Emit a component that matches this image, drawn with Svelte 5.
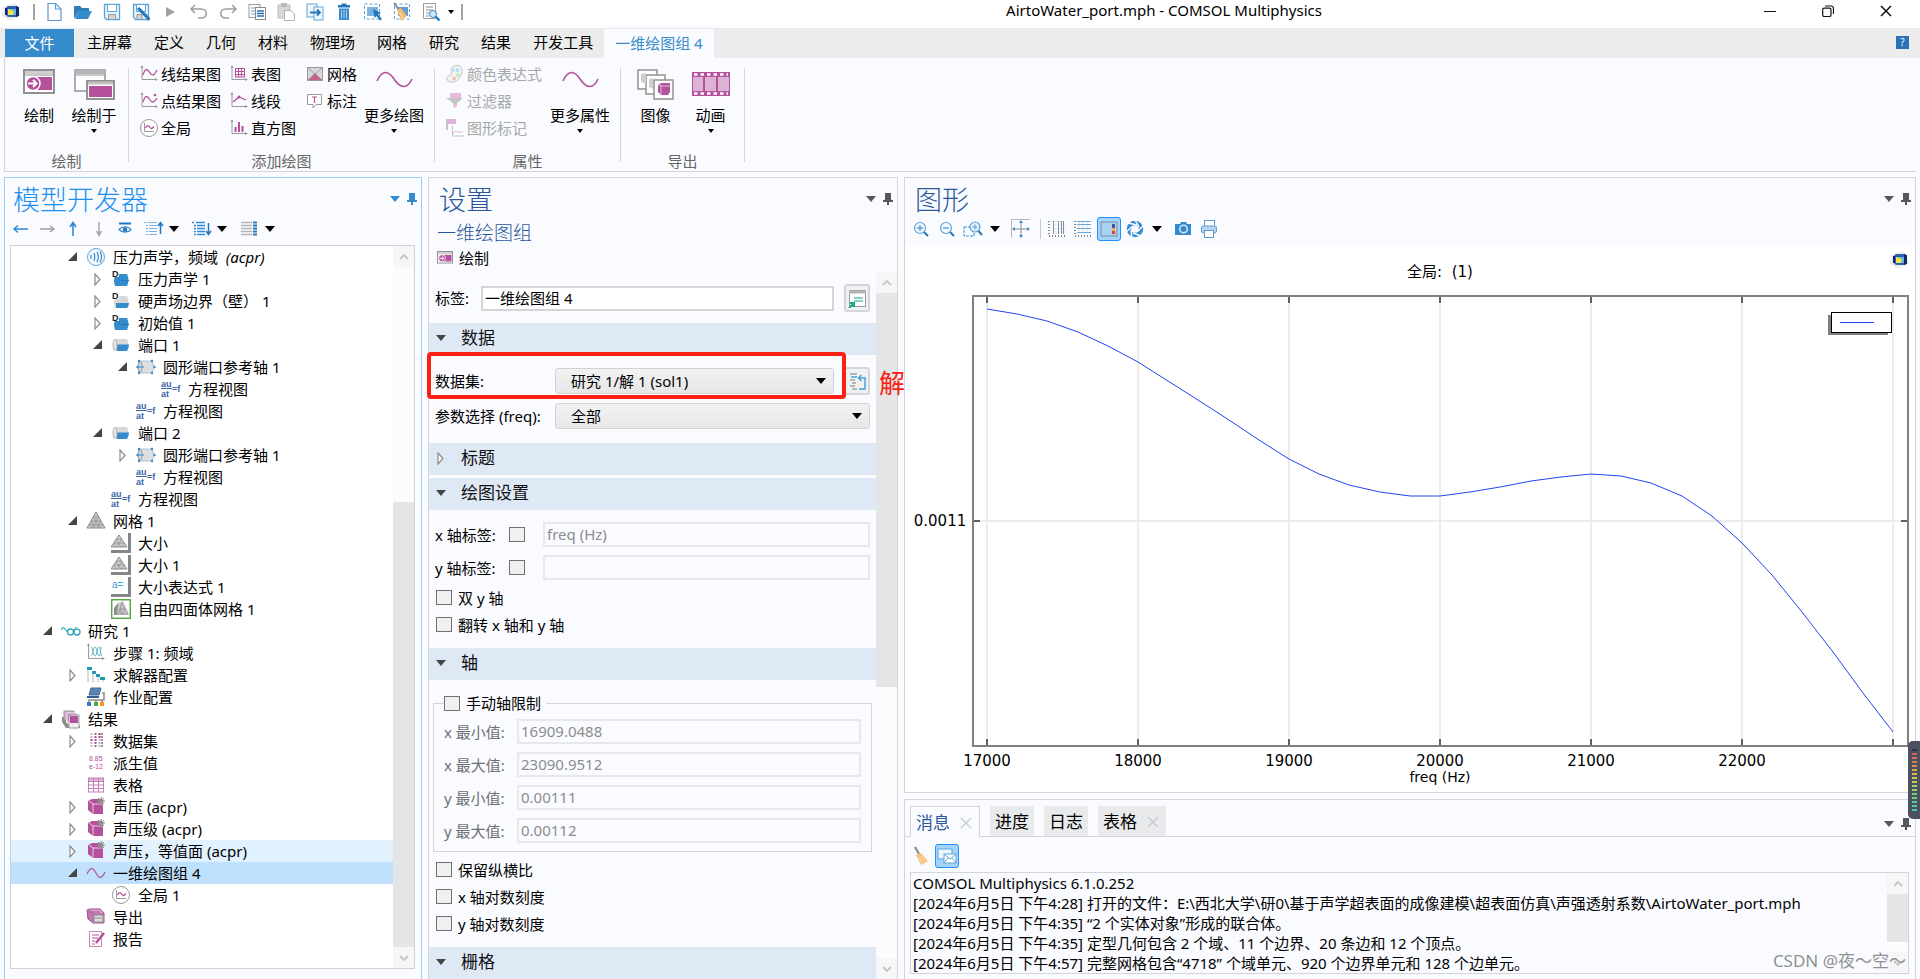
<script lang="ts">
  const icons: Record<string, string> = {
    logo: `<path d="M2 5 L15 1 L20 13 L9 19 L1 14Z" fill="#ececec"/><rect x="5" y="4" width="13" height="11" rx="3" fill="#2b5fb4"/><path d="M15 4 l3 1.500 v8 l-3 1.500z" fill="#0b2a66"/><rect x="7" y="7" width="8" height="6" fill="#5fb6d8"/><path d="M7 7 L13 9 L12 13 L7 13Z" fill="#f4e04a"/><path d="M5 6 V13" stroke="#10206a" stroke-width="2"/>`,
    fresh: `<path d="M4 1.500 H11.500 L17 7 V18.500 H4Z" fill="#fff" stroke="#5c9bd1" stroke-width="1.200"/><path d="M11.500 1.500 V7 H17" fill="none" stroke="#5c9bd1" stroke-width="1.200"/>`,
    open: `<path d="M1 4 H7 L9 6 H16 V9 H6 L2 16 H1Z" fill="#2f7fbf"/><path d="M6 9 H19 L15 17 H2Z" fill="#368bcd"/>`,
    save: `<path d="M2.500 2.500 H17.500 V17.500 H4.500 L2.500 15.500Z" fill="#e8f3fb" stroke="#5fa5d8" stroke-width="1.300"/><path d="M5.500 3 V9.500 H14.500 V3" fill="#fff" stroke="#5fa5d8"/><path d="M6.500 17 V12.500 H13.500 V17" fill="#d4d4d4" stroke="#9a9a9a"/>`,
    saveas: `<path d="M2.500 2.500 H17.500 V17.500 H4.500 L2.500 15.500Z" fill="#e8f3fb" stroke="#5fa5d8" stroke-width="1.300"/><path d="M5.500 3 V9.500 H14.500 V3" fill="#fff" stroke="#5fa5d8"/><path d="M6 17 V12.500 H11 V17" fill="#d4d4d4" stroke="#9a9a9a"/><path d="M7 6 L17 16 L18 18" stroke="#2477ba" stroke-width="3"/>`,
    play: `<path d="M6 5 L15 10 L6 15Z" fill="#a0a0a0"/>`,
    undo: `<path d="M6 3 L2 7 L6 11 M2 7 H12 C19 7 19 16 12 16 H9" fill="none" stroke="#a0a0a0" stroke-width="1.600"/>`,
    redo: `<path d="M14 3 L18 7 L14 11 M18 7 H8 C1 7 1 16 8 16 H11" fill="none" stroke="#a0a0a0" stroke-width="1.600"/>`,
    copy: `<rect x="2" y="2.500" width="11" height="13" fill="#fff" stroke="#9a9a9a"/><path d="M4 6H11M4 9H11M4 12H11" stroke="#5fa5d8"/><rect x="8.500" y="5.500" width="10" height="12" fill="#fff" stroke="#8a8a8a"/><path d="M10 9H17M10 11.500H17M10 14H17" stroke="#2d6fae" stroke-width="1.400"/>`,
    paste: `<path d="M2 3 H14 V16 H2Z" fill="#d8d8d8" stroke="#bdbdbd"/><rect x="5" y="1" width="6" height="4" fill="#b8b8b8"/><path d="M8.500 8.500 H15 L18.500 12 V18.500 H8.500Z" fill="#fff" stroke="#b0b0b0"/>`,
    duplicate: `<rect x="2" y="2" width="10" height="13" fill="#eef6fc" stroke="#5fa5d8"/><rect x="9" y="5" width="9" height="13" fill="#eef6fc" stroke="#5fa5d8"/><path d="M5 10.500H15M12 7.500L15 10.500L12 13.500" fill="none" stroke="#2477ba" stroke-width="1.800"/>`,
    trash: `<rect x="4" y="3" width="12" height="2.500" fill="#2477ba"/><rect x="7.500" y="1.500" width="5" height="2" fill="#2477ba"/><path d="M5 6.500H15V18H5Z" fill="#368bcd"/><path d="M7.500 8V16.500M10 8V16.500M12.500 8V16.500" stroke="#a7d2f0"/>`,
    select: `<rect x="1.500" y="2" width="15" height="15" fill="none" stroke="#5fa5d8" stroke-dasharray="3 2"/><rect x="4" y="5" width="11" height="9" fill="#7fb2de"/><path d="M10 7 L18 11 L15 12.500 L19 17 L17 18.500 L13.500 14 L11.500 16Z" fill="#2477ba"/>`,
    sweep: `<rect x="2.500" y="2" width="15" height="15" fill="none" stroke="#5fa5d8" stroke-dasharray="3 2"/><rect x="6" y="5" width="10" height="9" fill="#5f9dd3"/><path d="M2 1 L7 8" stroke="#8a8a8a" stroke-width="2"/><path d="M5 8 L9 6 L15 14 L9 19 Z" fill="#f2bd6f"/><path d="M8 11 L11 17" stroke="#fbe3bb"/>`,
    find: `<path d="M2.500 1.500H14.500V16.500H2.500Z" fill="#fff" stroke="#9a9a9a"/><path d="M5 5H12M5 8H12M5 11H9M5 14H8" stroke="#8a8a8a"/><circle cx="12" cy="12" r="3.500" fill="#cfe7f8" stroke="#368bcd"/><path d="M14.500 14.500L18.500 18.500" stroke="#2477ba" stroke-width="2.400"/>`,
    plot: `<rect x="1" y="1" width="30" height="23" fill="#fff" stroke="#929292" stroke-width="2"/><rect x="2" y="2" width="28" height="3" fill="#cfcfcf"/><path d="M2 6H30" stroke="#929292"/><rect x="12" y="8" width="17" height="13" fill="#b5509c"/><circle cx="10" cy="14.500" r="7" fill="#b5509c" stroke="#fff" stroke-width="1.500"/><path d="M5 14.500H13M10 11L13.500 14.500L10 18" fill="none" stroke="#fff" stroke-width="2"/>`,
    plotin: `<rect x="1" y="1" width="30" height="21" fill="#fff" stroke="#929292" stroke-width="1.500"/><path d="M1 3H31" stroke="#b5b5b5" stroke-width="4"/><path d="M1 6H31" stroke="#929292"/><rect x="13" y="12" width="27" height="18" fill="#fff" stroke="#929292" stroke-width="2"/><path d="M14 14H39" stroke="#c4c4c4" stroke-width="3"/><rect x="15" y="17" width="23" height="11" fill="#b5509c"/>`,
    axisline: `<path d="M3 2V15.500H18" fill="none" stroke="#9a9a9a"/><path d="M1.500 4L3 1L4.500 4M16 14L19 15.500L16 17" fill="#9a9a9a"/><path d="M4 11C7 2 9 6 11 9S15 12 18 6" fill="none" stroke="#b5509c" stroke-width="1.300"/>`,
    axispoint: `<path d="M3 2V15.500H18" fill="none" stroke="#9a9a9a"/><path d="M1.500 4L3 1L4.500 4M16 14L19 15.500L16 17" fill="#9a9a9a"/><path d="M4 11C7 2 9 6 11 9S15 12 18 7" fill="none" stroke="#b5509c" stroke-width="1.300"/><circle cx="16" cy="4" r="1.300" fill="#b5509c"/>`,
    global: `<circle cx="10" cy="10" r="8.500" fill="#fff" stroke="#9a9a9a"/><path d="M5.500 5V13.500H15" fill="none" stroke="#9a9a9a"/><path d="M6.500 10C8 6 10 8 11 9.500S13 11 15 8.500" fill="none" stroke="#b5509c" stroke-width="1.300"/>`,
    axistable: `<path d="M3 2V15.500H18" fill="none" stroke="#9a9a9a"/><path d="M1.500 4L3 1L4.500 4M16 14L19 15.500L16 17" fill="#9a9a9a"/><path d="M6 4.500H16M6 7.500H16M6 10.500H16M6 13H16M6.500 4V13M9.500 4V13M12.500 4V13M15.500 4V13" stroke="#b5509c"/>`,
    axisseg: `<path d="M3 2V15.500H18" fill="none" stroke="#9a9a9a"/><path d="M1.500 4L3 1L4.500 4M16 14L19 15.500L16 17" fill="#9a9a9a"/><path d="M4 11L10 6L17 9" fill="none" stroke="#b5509c" stroke-width="1.300"/><circle cx="10" cy="6" r="1.500" fill="#b5509c"/>`,
    histogram: `<path d="M3 2V15.500H18" fill="none" stroke="#9a9a9a"/><path d="M1.500 4L3 1L4.500 4M16 14L19 15.500L16 17" fill="#9a9a9a"/><path d="M6.500 9V14M10 4V14M13.500 8V14" stroke="#b5509c" stroke-width="2"/>`,
    surface: `<rect x="2.500" y="3.500" width="15" height="13" fill="#d6d9dc" stroke="#9a9a9a"/><path d="M3 16L10 9L17 16Z" fill="#c4638b"/><path d="M3 4L17 16M17 4L3 16" stroke="#a08a94" stroke-width=".8"/>`,
    note: `<path d="M2.500 3.500H16.500V13.500H11L8 17V13.500H2.500Z" fill="#fff" stroke="#9a9a9a"/><path d="M7 6H12M9.500 6V11M8.500 11H10.500" stroke="#b5509c"/>`,
    wave: `<path d="M1 12C6 1 12 1 18 10S31 21 36 10" fill="none" stroke="#b5509c" stroke-width="1.600"/>`,
    palette: `<path d="M9 2C15 0 18 3 17 8S12 19 6 18S1 13 5 11S3 5 9 2Z" fill="#f3f3f3" stroke="#c4c4c4"/><circle cx="8" cy="6" r="2" fill="#bfe3ec"/><circle cx="12.500" cy="6" r="2" fill="#b5dbf0"/><circle cx="13" cy="11" r="2" fill="#c7e8b4"/><circle cx="9" cy="14.500" r="2" fill="#f2c3b4"/>`,
    filter: `<rect x="5" y="2" width="11" height="6" fill="#e3bddb"/><path d="M1 7H18L12 12V14H8V12Z" fill="#c4c4c4"/><path d="M8 13H12V15L10 17L8 15Z" fill="#e3bddb"/>`,
    marker: `<path d="M2 1V12" stroke="#c4c4c4" stroke-width="2"/><rect x="3" y="1" width="8" height="5" fill="#dfb5d5"/><path d="M7.500 8V18H19" fill="none" stroke="#c0c0c0"/><path d="M8 16C11 10 13 17 18 13" fill="none" stroke="#dfb5d5"/>`,
    image: `<g fill="#fff" stroke="#929292" stroke-width="1.500"><rect x="1" y="1" width="19" height="19"/><rect x="9" y="6" width="19" height="19"/><rect x="17" y="11" width="19" height="19"/></g><path d="M4 5L9 4V15L4 13Z M12 10L16 9V20L12 18Z" fill="#cfcfcf"/><path d="M21 16L24 14H33V23L31 26H24L21 23Z" fill="#b5509c"/><path d="M21 16H24V26M24 17H33" stroke="#e4bfdc" fill="none"/>`,
    film: `<rect y="3" width="38" height="24" fill="#b5509c"/><path d="M2 5.500H36M2 24.500H36" stroke="#fff" stroke-width="2.500" stroke-dasharray="3.500 3"/><rect x="1" y="8" width="10" height="14" fill="#dcb3d5"/><rect x="13" y="8" width="11" height="14" fill="#dcb3d5"/><rect x="26" y="8" width="11" height="14" fill="#dcb3d5"/>`,
    left: `<path d="M17 10H3M7 6.500L3 10L7 13.500" fill="none" stroke="#2f8bd5" stroke-width="1.400"/>`,
    right: `<path d="M3 10H17M13 7L17 10L13 13" fill="none" stroke="#a0a0a0" stroke-width="1.400"/>`,
    up: `<path d="M10 17V4M7 8L10 3.500L13 8" fill="none" stroke="#2f8bd5" stroke-width="1.600"/>`,
    down: `<path d="M10 3V16M7.500 12L10 16.500L12.500 12" fill="none" stroke="#a0a0a0" stroke-width="1.400"/>`,
    eye: `<path d="M4 4.500H16" stroke="#2477ba" stroke-width="2"/><path d="M4 10.500C7 7 13 7 16 10.500C13 14 7 14 4 10.500Z" fill="#fff" stroke="#368bcd" stroke-width="1.200"/><circle cx="10" cy="10.500" r="2.200" fill="#2477ba"/>`,
    collapse: `<path d="M0 3.500H2M4 3.500H13M2 6.500H4M5 6.500H13M2 9.500H4M5 9.500H13M2 12.500H4M5 12.500H13M2 15.500H4M5 15.500H13" stroke="#7fb2de"/><path d="M16.500 15V4M14 7L16.500 3.500L19 7" fill="none" stroke="#2477ba" stroke-width="1.500"/>`,
    expand: `<path d="M0 3.500H2M4 3.500H13M2 6.500H4M5 6.500H13M2 9.500H4M5 9.500H13M2 12.500H4M5 12.500H13M2 15.500H4M5 15.500H13" stroke="#2f8bd5" stroke-width="1.300"/><path d="M16.500 4V15M14 12L16.500 15.500L19 12" fill="none" stroke="#2477ba" stroke-width="1.500"/>`,
    columns: `<path d="M1 3.500H12M1 6.500H12M1 9.500H12M1 12.500H12M1 15.500H12" stroke="#b5b5b5" stroke-width="1.500"/><path d="M13 3.500H17M13 6.500H17M13 9.500H17M13 12.500H17M13 15.500H17" stroke="#2477ba" stroke-width="2"/>`,
    physics: `<circle cx="10" cy="10" r="8.500" fill="#f3f9fe" stroke="#5fa5d8"/><path d="M5 8V12M8 6Q9.500 10 8 14M11 5Q13.500 10 11 15M14 4.500Q17 10 14 15.500" fill="none" stroke="#368bcd" stroke-width="1.200"/>`,
    domain: `<path d="M4 7Q2 11 4 17H16Q19 11 16 5H9Q6 5 4 7Z" fill="#368bcd"/><path d="M10 11.500H18M8 6V11" stroke="#2477ba"/><rect x="1" y="0" width="7" height="8" fill="#fff"/><text x="1" y="8" font-size="9" font-weight="700" fill="#222">D</text>`,
    wall: `<path d="M4 7Q2 11 4 17H16Q19 11 16 5H9Q6 5 4 7Z" fill="#d6d9dc"/><path d="M5 12H18Q18 15 16 17H5Z" fill="#368bcd"/><rect x="1" y="0" width="7" height="8" fill="#fff"/><text x="1" y="8" font-size="9" font-weight="700" fill="#222">D</text>`,
    port: `<path d="M3 5Q1 10 3 15H16Q19 10 16 4H5Z" fill="#d6d9dc"/><path d="M5 9.500H18Q18 13 16 16H6Z" fill="#368bcd"/><ellipse cx="4" cy="10" rx="2" ry="5.500" fill="#e6e6e6" stroke="#b4b4b4"/>`,
    axis: `<path d="M3 4H16L18 10L16 16H3Z" fill="#dcdfe2" stroke="#b9c2ca"/><ellipse cx="4" cy="10" rx="2" ry="5.500" fill="none" stroke="#999"/><g fill="#2f8bd5"><circle cx="3" cy="4" r="1.200"/><circle cx="16" cy="4" r="1.200"/><circle cx="18.500" cy="10" r="1.200"/><circle cx="1.500" cy="10" r="1.200"/><circle cx="16" cy="16" r="1.200"/><circle cx="3" cy="16" r="1.200"/></g><path d="M2 10H8" stroke="#368bcd"/>`,
    equation: `<g fill="#3b66a3" font-size="9" font-weight="700"><text x="0" y="8">au</text><text x="0" y="18">at</text><text x="11" y="13">=f</text></g><path d="M0 9.500H11" stroke="#3b66a3"/>`,
    mesh: `<path d="M10 1L19 17H1Z" fill="#c6c6c6" stroke="#8c8c8c"/><path d="M7.500 6H12.500M5 10H15M3 14H17M7.500 6L14 17M12.500 6L6 17M5 10L9 17M15 10L11 17" stroke="#909090" fill="none" stroke-width=".8"/>`,
    size: `<path d="M8 2L16 14H0Z" fill="#d0d0d0" stroke="#8c8c8c"/><path d="M5 6H11M3 10H13M5 6L10 14M11 6L6 14M3 10L5 14M13 10L11 14" stroke="#909090" stroke-width=".8"/><path d="M18.500 0V18.500H0" fill="none" stroke="#85858a" stroke-width="3"/>`,
    expression: `<text x="1" y="11" font-size="10" fill="#3f9edb">a=</text><path d="M18.500 0V18.500H0" fill="none" stroke="#85858a" stroke-width="3"/>`,
    tetra: `<rect x=".7" y=".7" width="18.600" height="18.600" fill="#fff" stroke="#56a845" stroke-width="1.500"/><path d="M7 4L12 2L18 16H3V9Z" fill="#c8c8c8"/><path d="M3 9L7 4L6 16L3 16Z" fill="#8d8d8d"/><path d="M11 4L7 15H17ZM9 10H14L11 15Z" stroke="#8d8d8d" stroke-width=".8" fill="none"/>`,
    study: `<path d="M0 9Q2 5 4 8T7 11" fill="none" stroke="#2da5b8" stroke-width="1.200"/><circle cx="9.500" cy="11" r="3" fill="none" stroke="#2da5b8" stroke-width="1.300"/><circle cx="16" cy="11" r="3" fill="none" stroke="#2da5b8" stroke-width="1.300"/><path d="M12 9L15 6L18 9" fill="none" stroke="#7cc5d0"/>`,
    step: `<path d="M2.500 1V15.500H18" fill="none" stroke="#9a9a9a"/><path d="M1 3L2.500 0L4 3M16 14L19 15.500L16 17" fill="#9a9a9a"/><path d="M5 4C7 4 7 13 9 13S11 4 13 4S14 13 16 13M5 13C7 13 7 4 9 4S11 13 13 13S14 4 16 4" fill="none" stroke="#5cb5c5"/>`,
    solver: `<path d="M2 3V17M7 6V17M12 10V17M17 14V17" stroke="#b5b5b5"/><path d="M1 2H6V5H1ZM6 6H10V9H6ZM10 9H14V12H10ZM14 12H19V15H14Z" fill="#2199b5"/>`,
    job: `<path d="M5 1H15L13 8H3Z" fill="#5b84b5" stroke="#436896"/><path d="M1 9H13V11H1Z" fill="#3a5c88"/><path d="M16 6H18V13H3V15M10 13V16M16 13V16" fill="none" stroke="#8c8c8c" stroke-width="1.500"/><rect x="1" y="15" width="4" height="4" fill="#3478bd"/><rect x="8" y="15" width="4" height="4" fill="#56a845"/><rect x="14" y="15" width="4" height="4" fill="#f29a1f"/>`,
    results: `<path d="M1 8L5 8V13L9 17H19V19H5L1 13Z" fill="#8c8c8c"/><rect x="3" y="2" width="10" height="9" fill="#d9a9cf" stroke="#9a9a9a"/><rect x="6" y="4" width="10" height="9" fill="#cf87be" stroke="#eee"/><path d="M8 6H18V19H8Z" fill="#eee" stroke="#9a9a9a"/><rect x="9" y="7" width="8" height="7" fill="#b5509c"/>`,
    dataset: `<path d="M5.500 2V17M13.500 2V17" stroke="#b9b9b9" stroke-width="2" stroke-dasharray="2 1"/><path d="M9.500 2V17M5.500 8V11M13.500 2V8" stroke="#b5509c" stroke-width="2" stroke-dasharray="2 1"/><path d="M16 2V17" stroke="#a98aa3" stroke-width="2" stroke-dasharray="2 1"/>`,
    derived: `<g fill="#b5509c" font-size="7"><text x="3" y="8">8.85</text><text x="3" y="16">e-12</text></g>`,
    table: `<rect x="2" y="3" width="16" height="14" fill="#fff"/><path d="M2 3H18V6H2Z" fill="#dfb5d5"/><path d="M2 3H18M2 6.500H18M2 10H18M2 13.500H18M2 17H18M2.500 3V17M7.500 3V17M12.500 3V17M17.500 3V17" stroke="#c57fb5"/>`,
    cube: `<path d="M2 4L6 2H14L17 6V17H7L2 13Z" fill="#b5509c"/><path d="M3 4L7 7V17M7 7H17" fill="none" stroke="#e9cce3"/><circle cx="15" cy="4" r="2.500" fill="#8c8c8c"/><path d="M15 0V8M11 4H19M12 1L18 7M18 1L12 7" stroke="#8c8c8c"/>`,
    curve: `<path d="M1 11C5 2 8 6 10 10S15 18 19 9" fill="none" stroke="#b5509c" stroke-width="1.200"/>`,
    export: `<path d="M1 3L4 2H14L18 6V16H7L2 12Z" fill="#d9a9cf" stroke="#a44d90"/><path d="M3 3V12M5 4V14M3 5H14M7 7H18M7 6V16" stroke="#a44d90" fill="none"/><path d="M8 8H17V15H8Z" fill="#ddd" stroke="#8c8c8c"/><path d="M9 11H16" stroke="#8c8c8c"/>`,
    report: `<path d="M3.500 2.500H15.500V17.500H3.500Z" fill="#fff" stroke="#c287b4"/><path d="M6 6H13M6 9H12M6 12H9M6 15H9" stroke="#b5509c"/><path d="M18 4L10 14" stroke="#b5509c" stroke-width="2.500"/>`,
    rename: `<rect x="2.500" y="2.500" width="16" height="16" fill="#fff" stroke="#9a9a9a"/><path d="M2 4H19" stroke="#b5b5b5" stroke-width="3"/><path d="M7 10H16M7 13H16" stroke="#17a884"/><path d="M2 20L7 15M3 15H7V19" fill="none" stroke="#17a884" stroke-width="2"/>`,
    goto: `<path d="M3 3H10M3 9H8M5 12H9M3 15H8M5 18H10" stroke="#a3a3a3" stroke-width="1.400"/><path d="M4 6H10" stroke="#3f9edb" stroke-width="1.400"/><path d="M12 18H18V7H12M14.500 4L11.500 7L14.500 10" fill="none" stroke="#3f9edb" stroke-width="1.400"/>`,
    zoomin: `<circle cx="9" cy="9" r="5.500" fill="#f0f8fe" stroke="#5fa5d8" stroke-width="1.200"/><path d="M6 9H12M9 6V12" stroke="#5f9dd3" stroke-width="1.400"/><path d="M13 13L17 17" stroke="#2477ba" stroke-width="2"/>`,
    zoomout: `<circle cx="9" cy="9" r="5.500" fill="#f0f8fe" stroke="#5fa5d8" stroke-width="1.200"/><path d="M6 9H12" stroke="#5f9dd3" stroke-width="1.400"/><path d="M13 13L17 17" stroke="#2477ba" stroke-width="2"/>`,
    zoombox: `<rect x="1" y="8" width="10" height="9" fill="none" stroke="#368bcd" stroke-dasharray="3 1"/><circle cx="12" cy="8" r="5" fill="#e3f1fb" stroke="#5fa5d8" stroke-width="1.200"/><path d="M9.500 8H14.500M12 5.500V10.500" stroke="#5f9dd3"/><path d="M15.500 12L19 16" stroke="#2477ba" stroke-width="2"/>`,
    extents: `<path d="M.5 19V.5H19" fill="none" stroke="#b5b5b5"/><path d="M10 2V18M2 10H18" stroke="#8c8c8c"/><path d="M10 1L12 4H8ZM10 19L12 16H8ZM1 10L4 8V12ZM19 10L16 8V12Z" fill="#368bcd"/>`,
    xgrid: `<path d="M2 2V17H18" fill="none" stroke="#888" stroke-width="2" stroke-dasharray="1 2"/><path d="M5 2.500H18M5 6H18M5 9.500H18M5 13H18" stroke="#dfe4e9"/><path d="M6.500 2V15M11.500 2V15M14.500 2V15M16.500 2V15" stroke="#7f93ad"/>`,
    ygrid: `<path d="M2 2V17H18" fill="none" stroke="#888" stroke-width="2" stroke-dasharray="1 2"/><path d="M6 2V14M10 2V14M14 2V14" stroke="#dfe4e9"/><path d="M4 2.500H18M4 5.500H18M4 9.500H18M4 13.500H18" stroke="#6aa5d5"/>`,
    legend: `<rect x="2" y="3" width="16" height="14" fill="#a9d3f5" stroke="#7b8b99"/><rect x="13" y="5" width="3" height="4" fill="#4b4f9b"/><rect x="13" y="9" width="3" height="3" fill="#f2b13c"/><rect x="13" y="12" width="3" height="3" fill="#e0452c"/>`,
    shutter: `<circle cx="10" cy="10" r="6" fill="none" stroke="#368bcd" stroke-width="4.500"/><path d="M10 1L14 8M18 7L12 13M16 17L8 14M7 19L6 11M1 13L8 7M3 4L12 6" stroke="#fafbff" stroke-width="1.500"/>`,
    camera: `<path d="M2 5H7L8 3H13L14 5H18V16H2Z" fill="#368bcd"/><circle cx="10.500" cy="10" r="3.800" fill="#368bcd" stroke="#cfe7f8" stroke-width="1.500"/>`,
    print: `<rect x="5.500" y="1.500" width="10" height="6" fill="#fff" stroke="#5c9bd1"/><rect x="2.500" y="7" width="15" height="7" rx="2" fill="#b9d4ec" stroke="#5c9bd1"/><rect x="5.500" y="11.500" width="9" height="7" fill="#fff" stroke="#5c9bd1"/>`,
    broom: `<path d="M2 1L6 8" stroke="#8a8a8a" stroke-width="2.200"/><path d="M3 9L8 7L15 15L8 19Z" fill="#f5c37b"/><path d="M6 11L9 17M8 10L12 15" stroke="#fde6c0"/>`,
    mail: `<rect x="1" y="3" width="14" height="10" fill="#eaf5fd" stroke="#5fa5d8"/><rect x="7" y="8" width="12" height="9" fill="#fff" stroke="#5fa5d8"/><path d="M7 8L13 13L19 8M7 17L11 12M19 17L15 12" fill="none" stroke="#5fa5d8"/>`,
    pin: `<path d="M3 1H9V8H11V10H7V13H5V10H1V8H3Z" fill="currentColor"/>`,
    caret: `<path d="M1 3H11L6 9Z" fill="currentColor"/>`,
    smallcaret: `<path d="M3 4H9L6 8Z" fill="currentColor"/>`,
    opened: `<path d="M10 1V10H1Z" fill="#454545"/>`,
    closed: `<path d="M3 1L8 6.500L3 12Z" fill="#fff" stroke="#8c8c8c" stroke-width="1.200"/>`,
    chevup: `<path d="M2 8L6 4L10 8" fill="none" stroke="#c4c6c8" stroke-width="1.800"/>`,
    chevdown: `<path d="M2 4L6 8L10 4" fill="none" stroke="#c4c6c8" stroke-width="1.800"/>`,
    close: `<path d="M1 1L11 11M11 1L1 11" stroke="currentColor" stroke-width="1.400"/>`,
    minimize: `<path d="M0 6.500H12" stroke="#111"/>`,
    restore: `<rect x=".7" y="3.200" width="8.300" height="8.300" rx="1.500" fill="none" stroke="#111" stroke-width="1.200"/><path d="M3 1H9Q11.500 1 11.500 3.500V9" fill="none" stroke="#111" stroke-width="1.200"/>`,
  };

  const quick = [
    ["fresh", "新建"], ["open", "打开"], ["save", "保存"], ["saveas", "另存为"], ["play", "运行"],
    ["undo", "撤销"], ["redo", "重做"], ["copy", "复制"], ["paste", "粘贴"], ["duplicate", "复制粘贴"],
    ["trash", "删除"], ["select", "选择"], ["sweep", "清除"], ["find", "查找"],
  ];

  const tabs = ["主屏幕", "定义", "几何", "材料", "物理场", "网格", "研究", "结果", "开发工具"];

  const plotItems = [
    ["axisline", "线结果图"], ["axistable", "表图"], ["surface", "网格"],
    ["axispoint", "点结果图"], ["axisseg", "线段"], ["note", "标注"],
    ["global", "全局"], ["histogram", "直方图"],
  ];

  const attrItems = [["palette", "颜色表达式"], ["filter", "过滤器"], ["marker", "图形标记"]];

  const tree = [
    { depth: 1, state: "opened", icon: "physics", label: "压力声学，频域", note: "(acpr)" },
    { depth: 2, state: "closed", icon: "domain", label: "压力声学 1" },
    { depth: 2, state: "closed", icon: "wall", label: "硬声场边界（壁） 1" },
    { depth: 2, state: "closed", icon: "domain", label: "初始值 1" },
    { depth: 2, state: "opened", icon: "port", label: "端口 1" },
    { depth: 3, state: "opened", icon: "axis", label: "圆形端口参考轴 1" },
    { depth: 4, icon: "equation", label: "方程视图" },
    { depth: 3, icon: "equation", label: "方程视图" },
    { depth: 2, state: "opened", icon: "port", label: "端口 2" },
    { depth: 3, state: "closed", icon: "axis", label: "圆形端口参考轴 1" },
    { depth: 3, icon: "equation", label: "方程视图" },
    { depth: 2, icon: "equation", label: "方程视图" },
    { depth: 1, state: "opened", icon: "mesh", label: "网格 1" },
    { depth: 2, icon: "size", label: "大小" },
    { depth: 2, icon: "size", label: "大小 1" },
    { depth: 2, icon: "expression", label: "大小表达式 1" },
    { depth: 2, icon: "tetra", label: "自由四面体网格 1" },
    { depth: 0, state: "opened", icon: "study", label: "研究 1" },
    { depth: 1, icon: "step", label: "步骤 1: 频域" },
    { depth: 1, state: "closed", icon: "solver", label: "求解器配置" },
    { depth: 1, icon: "job", label: "作业配置" },
    { depth: 0, state: "opened", icon: "results", label: "结果" },
    { depth: 1, state: "closed", icon: "dataset", label: "数据集" },
    { depth: 1, icon: "derived", label: "派生值" },
    { depth: 1, icon: "table", label: "表格" },
    { depth: 1, state: "closed", icon: "cube", label: "声压 (acpr)" },
    { depth: 1, state: "closed", icon: "cube", label: "声压级 (acpr)" },
    { depth: 1, state: "closed", icon: "cube", label: "声压，等值面 (acpr)", hover: true },
    { depth: 1, state: "opened", icon: "curve", label: "一维绘图组 4", selected: true },
    { depth: 2, icon: "global", label: "全局 1" },
    { depth: 1, icon: "export", label: "导出" },
    { depth: 1, icon: "report", label: "报告" },
  ];

  let label = $state("一维绘图组 4");

  const limits = [
    ["xmin", "x 最小值:", "16909.0488"],
    ["xmax", "x 最大值:", "23090.9512"],
    ["ymin", "y 最小值:", "0.00111"],
    ["ymax", "y 最大值:", "0.00112"],
  ];

  // transmission curve, one sample every 200 Hz from 17000 Hz
  const samples = [
    64, 69, 76, 87, 101, 117, 136, 155, 175, 195, 214, 229, 240, 247, 251, 251, 247, 242, 236, 232,
    229, 231, 238, 251, 271, 298, 330, 367, 407, 448, 487,
  ];
  const ticks = [17000, 18000, 19000, 20000, 21000, 22000, 23000];
  const px = (freq: number) => Math.round(82 + ((freq - 17000) / 1000) * 151);
  const curve = samples.map((y, i) => `${px(17000 + i * 200)},${y}`).join(" ");

  const log = [
    "COMSOL Multiphysics 6.1.0.252",
    "[2024年6月5日 下午4:28] 打开的文件：E:\\西北大学\\研0\\基于声学超表面的成像建模\\超表面仿真\\声强透射系数\\AirtoWater_port.mph",
    "[2024年6月5日 下午4:35] “2 个实体对象”形成的联合体。",
    "[2024年6月5日 下午4:35] 定型几何包含 2 个域、11 个边界、20 条边和 12 个顶点。",
    "[2024年6月5日 下午4:57] 完整网格包含“4718” 个域单元、920 个边界单元和 128 个边单元。",
  ];

  const meter = [
    "#2f3542", "#d8605c", "#dc6c52", "#e0784a", "#e0904a", "#dba748", "#d6bd4a", "#d0c84e", "#c0cc54",
    "#a8cf60", "#92cf6c", "#7fcf78", "#6ccd84", "#5ecb90", "#55c8a0", "#4cc4b0",
  ];
</script>

{#snippet icon(name: string, w = 20, h = 20)}
  <svg width={w} height={h} viewBox="0 0 {w} {h}" aria-hidden="true">{@html icons[name]}</svg>
{/snippet}

{#snippet tools()}
  <div class="panel-tools">
    <button aria-label="视图菜单">{@render icon("caret", 12, 12)}</button>
    <button aria-label="固定">{@render icon("pin", 12, 14)}</button>
  </div>
{/snippet}

{#snippet scrollbar(before: number, thumb: number, after: number)}
  <div class="scrollbar">
    <span class="cap">{@render icon("chevup", 12, 12)}</span>
    <span style="flex-grow: {before}"></span>
    <span class="thumb" style="flex-grow: {thumb}"></span>
    <span style="flex-grow: {after}"></span>
    <span class="cap">{@render icon("chevdown", 12, 12)}</span>
  </div>
{/snippet}

{#snippet check(text: string)}
  <label class="check"><input type="checkbox" />{text}</label>
{/snippet}

<div class="app">
  <header class="titlebar">
    <span class="logo">{@render icon("logo")}</span>
    <span class="bar"></span>
    {#each quick as [name, hint]}
      <button class="quick" aria-label={hint}>{@render icon(name)}</button>
    {/each}
    <button class="more" aria-label="更多">{@render icon("smallcaret", 12, 12)}</button>
    <span class="bar"></span>
    <h1>AirtoWater_port.mph - COMSOL Multiphysics</h1>
    <button class="window" aria-label="最小化">{@render icon("minimize", 12, 12)}</button>
    <button class="window" aria-label="还原">{@render icon("restore", 12, 12)}</button>
    <button class="window" aria-label="关闭">{@render icon("close", 12, 12)}</button>
  </header>

  <nav class="tabs">
    <button class="file">文件</button>
    {#each tabs as tab}
      <button>{tab}</button>
    {/each}
    <button class="active">一维绘图组 4</button>
    <button class="help" aria-label="帮助">?</button>
  </nav>

  <section class="ribbon">
    <div class="group draw">
      <div class="items">
        <button class="big">{@render icon("plot", 32, 31)}绘制</button>
        <button class="big">{@render icon("plotin", 41, 31)}绘制于{@render icon("smallcaret", 12, 12)}</button>
      </div>
      <p>绘制</p>
    </div>
    <div class="group add">
      <div class="items">
        <div class="small three">
          {#each plotItems as [name, text]}
            <button>{@render icon(name)}{text}</button>
          {/each}
        </div>
        <button class="big">{@render icon("wave", 37, 31)}更多绘图{@render icon("smallcaret", 12, 12)}</button>
      </div>
      <p>添加绘图</p>
    </div>
    <div class="group attrs">
      <div class="items">
        <div class="small">
          {#each attrItems as [name, text]}
            <button disabled>{@render icon(name)}{text}</button>
          {/each}
        </div>
        <button class="big">{@render icon("wave", 37, 31)}更多属性{@render icon("smallcaret", 12, 12)}</button>
      </div>
      <p>属性</p>
    </div>
    <div class="group out">
      <div class="items">
        <button class="big">{@render icon("image", 37, 31)}图像</button>
        <button class="big">{@render icon("film", 38, 31)}动画{@render icon("smallcaret", 12, 12)}</button>
      </div>
      <p>导出</p>
    </div>
  </section>

  <main>
    <section class="panel model">
      <header><h2>模型开发器</h2>{@render tools()}</header>
      <div class="toolbar">
        <button aria-label="后退">{@render icon("left")}</button>
        <button aria-label="前进">{@render icon("right")}</button>
        <button aria-label="上移">{@render icon("up")}</button>
        <button aria-label="下移">{@render icon("down")}</button>
        <button aria-label="显示">{@render icon("eye")}</button>
        <button class="drop" aria-label="折叠">{@render icon("collapse")}{@render icon("caret", 12, 12)}</button>
        <button class="drop" aria-label="展开">{@render icon("expand")}{@render icon("caret", 12, 12)}</button>
        <button class="drop" aria-label="列">{@render icon("columns")}{@render icon("caret", 12, 12)}</button>
      </div>
      <div class="treebox">
        <ul>
          {#each tree as node}
            <li class:hover={node.hover} class:selected={node.selected} style="padding-left: {24 + node.depth * 25}px">
              <span class="twist">
                {#if node.state}{@render icon(node.state, 11, 13)}{/if}
              </span>
              {@render icon(node.icon)}
              <span class="name">{node.label}{#if node.note}&nbsp; <i>{node.note}</i>{/if}</span>
            </li>
          {/each}
        </ul>
        {@render scrollbar(235, 444, 0)}
      </div>
    </section>

    <section class="panel settings">
      <header><h2>设置</h2>{@render tools()}</header>
      <h3>一维绘图组</h3>
      <button class="plot">
        <svg width="16" height="13" viewBox="0 0 32 26" aria-hidden="true">{@html icons.plot}</svg>绘制
      </button>
      <div class="scroller">
        <form>
          <div class="row first">
            <label for="label">标签:</label>
            <input id="label" type="text" bind:value={label} />
            <button type="button" class="square" aria-label="重命名">{@render icon("rename")}</button>
          </div>

          <h4>{@render icon("caret", 12, 12)}数据</h4>
          <div class="block data">
            <div class="row wide">
              <label for="dataset">数据集:</label>
              <span class="select"><select id="dataset"><option>研究 1/解 1 (sol1)</option></select>{@render icon("caret", 12, 12)}</span>
              <button type="button" class="square" aria-label="转到源">{@render icon("goto")}</button>
              <span class="mark"><b>解</b></span>
            </div>
            <div class="row wide">
              <label for="param">参数选择 (freq):</label>
              <span class="select"><select id="param"><option>全部</option></select>{@render icon("caret", 12, 12)}</span>
            </div>
          </div>

          <h4 class="shut">{@render icon("closed", 12, 13)}标题</h4>
          <h4>{@render icon("caret", 12, 12)}绘图设置</h4>
          <div class="block">
            <div class="row axis">
              <label for="xl">x 轴标签:</label><input type="checkbox" aria-label="x 轴标签" />
              <input id="xl" type="text" value="freq (Hz)" disabled />
            </div>
            <div class="row axis">
              <label for="yl">y 轴标签:</label><input type="checkbox" aria-label="y 轴标签" />
              <input id="yl" type="text" disabled />
            </div>
            <div class="checks">
              {@render check("双 y 轴")}
              {@render check("翻转 x 轴和 y 轴")}
            </div>
          </div>

          <h4>{@render icon("caret", 12, 12)}轴</h4>
          <fieldset>
            <legend>{@render check("手动轴限制")}</legend>
            {#each limits as [id, text, value]}
              <div class="row limit">
                <label for={id}>{text}</label>
                <input {id} type="text" {value} disabled />
              </div>
            {/each}
          </fieldset>
          <div class="checks tail">
            {@render check("保留纵横比")}
            {@render check("x 轴对数刻度")}
            {@render check("y 轴对数刻度")}
          </div>
          <h4>{@render icon("caret", 12, 12)}栅格</h4>
        </form>
        {@render scrollbar(0, 394, 271)}
      </div>
    </section>

    <div class="side">
      <section class="panel graphics">
        <header><h2>图形</h2>{@render tools()}</header>
        <div class="toolbar">
          <button aria-label="放大">{@render icon("zoomin")}</button>
          <button aria-label="缩小">{@render icon("zoomout")}</button>
          <button class="drop" aria-label="框选缩放">{@render icon("zoombox")}{@render icon("caret", 12, 12)}</button>
          <button aria-label="缩放到窗口大小">{@render icon("extents")}</button>
          <span class="rule"></span>
          <button aria-label="x 栅格">{@render icon("xgrid")}</button>
          <button aria-label="y 栅格">{@render icon("ygrid")}</button>
          <button class="on" aria-label="显示图例">{@render icon("legend")}</button>
          <button class="drop" aria-label="快照">{@render icon("shutter")}{@render icon("caret", 12, 12)}</button>
          <button aria-label="图像快照">{@render icon("camera")}</button>
          <button aria-label="打印">{@render icon("print")}</button>
        </div>
        <svg class="chart" viewBox="0 0 1010 547" role="img" aria-label="全局: (1)">
          <g class="grid">
            {#each ticks as t}<path d="M{px(t)} 52V500" />{/each}
            <path d="M69 276H1002" />
          </g>
          <g class="ticks">
            {#each ticks as t}<path d="M{px(t)} 52V58M{px(t)} 494V500" />{/each}
            <path d="M69 276H75M996 276H1002" />
          </g>
          <rect class="frame" x="68" y="51" width="935" height="450" />
          <polyline class="curve" points={curve} />
          <rect x="923" y="70" width="60" height="20" fill="#808080" />
          <rect x="926.5" y="67.5" width="60" height="20" fill="#fff" stroke="#000" />
          <path d="M935 77.500H969" stroke="#2143f0" />
          <g transform="translate(984 5)">{@html icons.logo}</g>
          <text x="535" y="32">全局:&nbsp; (1)</text>
          <text x="35" y="281">0.0011</text>
          {#each ticks.slice(0, 6) as t}<text x={px(t)} y="521">{t}</text>{/each}
          <text class="unit" x="535" y="537">freq (Hz)</text>
        </svg>
      </section>

      <section class="panel messages">
        <header>
          <button class="tab current">消息{@render icon("close", 12, 12)}</button>
          <button class="tab">进度</button>
          <button class="tab">日志</button>
          <button class="tab">表格{@render icon("close", 12, 12)}</button>
          {@render tools()}
        </header>
        <div class="toolbar">
          <button aria-label="清除">{@render icon("broom")}</button>
          <button class="on" aria-label="消息通知">{@render icon("mail")}</button>
        </div>
        <div class="logbox">
          <div class="log">
            {#each log as line}<p>{line}</p>{/each}
          </div>
          {@render scrollbar(0, 48, 10)}
        </div>
      </section>
    </div>
  </main>

  <div class="meter">
    {#each meter as color}<span style="background: {color}"></span>{/each}
  </div>
  <div class="watermark">CSDN @夜～空～</div>
</div>

<style>
  :global(body) {
    background: #fafbff;
    overflow: hidden;
  }

  .app {
    position: relative;
    height: 100vh;
    display: flex;
    flex-direction: column;
    overflow: hidden;
    font: 15px/20px "Noto Sans", "Noto Sans CJK SC", sans-serif;
    color: #000;
  }

  .app :global(svg) {
    flex: none;
    display: block;
  }

  .app :global(svg text) {
    font-family: "Liberation Sans", sans-serif;
  }

  h1, h2, h3, h4, p, ul {
    margin: 0;
    padding: 0;
    font-weight: 400;
  }

  button {
    margin: 0;
    padding: 0;
    border: 0;
    background: none;
    font: inherit;
    color: inherit;
    white-space: nowrap;
    display: flex;
    align-items: center;
    justify-content: center;
  }

  input, select {
    font: inherit;
    color: inherit;
    margin: 0;
    box-sizing: border-box;
  }

  .titlebar {
    display: flex;
    align-items: center;
    box-sizing: border-box;
    height: 25px;
    padding: 0 5px 1px 0;
    background: #fff;
    margin-bottom: 3px;
  }

  .logo {
    width: 33px;
    padding-left: 1px;
    box-sizing: border-box;
  }

  .bar {
    width: 2px;
    height: 16px;
    background: #a3a3a3;
    margin-right: 4px;
  }

  .quick {
    width: 29px;
    height: 24px;
  }

  .more {
    width: 12px;
    margin-right: 4px;
  }

  .titlebar h1 {
    flex: 1;
    padding: 0 0 4px 120px;
    text-align: center;
    font-size: 15px;
  }

  .window {
    width: 58px;
    height: 24px;
    padding-bottom: 2px;
  }

  .tabs {
    display: flex;
    height: 30px;
    padding-left: 5px;
    background: #ececed;
  }

  .tabs button {
    padding: 0 11px 2px;
  }

  .tabs .file {
    width: 69px;
    margin: 1px 2px 1px 0;
    padding-bottom: 0;
    background: #368bcd;
    color: #fff;
  }

  .tabs .active {
    margin-top: 1px;
    background: #fafbff;
    color: #368bcd;
  }

  .tabs .help {
    width: 13px;
    height: 13px;
    padding: 0;
    margin: 8px 11px 0 auto;
    background: #2a72b5;
    color: #fff;
    font-size: 10px;
    line-height: 13px;
  }

  .ribbon {
    display: flex;
    height: 113px;
    margin: 0 4px 5px;
    border: solid #d3d5d8;
    border-width: 0 0 1px 1px;
  }

  .group {
    display: flex;
    flex-direction: column;
    box-sizing: border-box;
    height: 94px;
    margin-top: 10px;
    border-right: 1px solid #d3d5d8;
  }

  .group .items {
    display: flex;
    height: 84px;
    flex: none;
    margin-top: -1px;
  }

  .group p {
    text-align: center;
    color: #666;
  }

  .draw { width: 124px; }
  .draw .items { padding-left: 11px; gap: 2px; }
  .add { width: 306px; }
  .add .items { padding-left: 10px; }
  .attrs { width: 186px; }
  .attrs .items { padding-left: 10px; }
  .out { width: 124px; }
  .out .items { padding-left: 9px; gap: 4px; }

  .big {
    flex-direction: column;
    justify-content: flex-start;
    width: 60px;
    padding-top: 2px;
    line-height: 20px;
  }

  .big > :global(svg:first-child) {
    margin-bottom: 5px;
  }

  .draw .big:first-child { width: 46px; }
  .out .big { width: 51px; }

  .small {
    display: grid;
    grid-template-rows: repeat(3, 27px);
    margin-top: -7px;
    grid-template-columns: 105px;
  }

  .small.three {
    grid-template-columns: 90px 76px 59px;
  }

  .small button {
    justify-content: flex-start;
    gap: 2px;
  }

  .small button:disabled {
    color: #a5a7aa;
  }

  main {
    flex: 1;
    min-height: 0;
    display: grid;
    grid-template-columns: 418px 470px minmax(0, 1fr);
    gap: 6px;
    padding: 0 4px;
  }

  .panel {
    display: flex;
    flex-direction: column;
    min-height: 0;
    box-sizing: border-box;
    border: 1px solid #d3d5d8;
  }

  .model, .settings {
    border-bottom: 0;
  }

  .model {
    border-color: #99cdf5;
    padding: 0 6px 10px 5px;
  }

  .panel > header {
    display: flex;
    align-items: center;
    height: 39px;
    flex: none;
  }

  h2 {
    padding: 3px 0 0 10px;
    font-size: 27px;
    line-height: 34px;
    font-weight: 200;
    font-family: "Noto Sans CJK SC", sans-serif;
    color: #2b579a;
  }

  .model h2 {
    padding-left: 3px;
    color: #1e90ee;
  }

  .panel-tools {
    display: flex;
    gap: 5px;
    margin-left: auto;
    padding: 2px 3px 0 0;
    color: #55575a;
  }

  .model .panel-tools {
    padding-right: 0;
    margin-right: -3px;
    color: #368bcd;
  }

  .toolbar {
    display: flex;
    align-items: center;
    height: 24px;
    flex: none;
    gap: 6px;
  }

  .drop {
    gap: 6px;
  }

  .on {
    width: 24px;
    height: 24px;
    box-sizing: border-box;
    border: 1px solid #1e90ff;
    border-radius: 3px;
    background: #a5d4fb;
  }

  .model .toolbar {
    padding: 0 0 4px 3px;
    gap: 10px;
  }

  .model .toolbar button {
    width: 16px;
  }

  .model .toolbar .drop {
    width: 38px;
    gap: 4px;
  }

  .treebox {
    flex: 1;
    min-height: 0;
    display: flex;
    border: 1px solid #cfd1d4;
    background: #fff;
  }

  ul {
    flex: 1;
    list-style: none;
    overflow: hidden;
  }

  li {
    display: flex;
    align-items: center;
    height: 22px;
    white-space: nowrap;
  }

  li.hover { background: #e2f1fe; }
  li.selected { background: #bfe1fd; }

  .twist {
    width: 26px;
    flex: none;
    padding-left: 7px;
    box-sizing: border-box;
  }

  .name {
    padding-left: 7px;
  }

  .scrollbar {
    width: 21px;
    flex: none;
    display: flex;
    flex-direction: column;
    background: #fcfcfe;
  }

  .cap {
    height: 21px;
    flex: none;
    display: flex;
    align-items: center;
    justify-content: center;
    background: #f5f6f7;
  }

  .thumb {
    background: #e4e5e7;
  }

  h3 {
    padding: 2px 0 0 8px;
    font-size: 19px;
    line-height: 28px;
    font-weight: 200;
    color: #2b579a;
  }

  .plot {
    align-self: flex-start;
    gap: 6px;
    padding: 0 0 4px 8px;
    height: 25px;
  }

  .scroller {
    flex: 1;
    min-height: 0;
    display: flex;
  }

  form {
    flex: 1;
  }

  .row {
    display: flex;
    align-items: center;
  }

  .row label {
    flex: none;
  }

  input[type="text"] {
    flex: 1;
    min-width: 0;
    height: 25px;
    padding: 0 2px 2px;
    border: 2px solid #d3d5d8;
    background: #fff;
  }

  input[type="text"]:disabled {
    border-color: #e6e8eb;
    background: #fafbff;
    color: #8b8d90;
  }

  input[type="checkbox"] {
    appearance: none;
    flex: none;
    width: 16px;
    height: 15px;
    border: 1px solid #707070;
    background: #f0f0f0;
  }

  .first {
    padding: 12px 6px 11px;
    height: 28px;
  }

  .first label {
    width: 46px;
  }

  .square {
    width: 26px;
    height: 28px;
    margin-left: 10px;
    box-sizing: border-box;
    border: 2px solid #d3d5d8;
    border-radius: 3px;
    background: #f0f1f3;
  }

  h4 {
    display: flex;
    align-items: center;
    gap: 14px;
    height: 30px;
    padding: 0 0 2px 6px;
    background: #dfe8f5;
    font-size: 17px;
    color: #111;
  }

  h4 > :global(svg) {
    color: #454545;
  }

  .shut {
    margin-bottom: 3px;
  }

  .block {
    padding: 12px 6px 10px;
  }

  .data {
    padding-bottom: 13px;
  }

  .wide {
    position: relative;
    height: 28px;
  }

  .wide + .wide {
    margin-top: 7px;
  }

  .wide label {
    width: 120px;
  }

  .select {
    position: relative;
    flex: 1;
  }

  .select select {
    display: block;
    appearance: none;
    width: 100%;
    height: 26px;
    padding: 0 15px;
    border: 1px solid #d0d2d5;
    border-radius: 3px;
    background: linear-gradient(#f2f2f3, #e7e7e8);
  }

  .select :global(svg) {
    position: absolute;
    right: 7px;
    top: 7px;
  }

  /* red highlight round the data set row */
  .mark {
    position: absolute;
    left: -8px;
    right: 24px;
    top: -15px;
    height: 39px;
    border: 4px solid #fc2013;
    border-radius: 4px;
    z-index: 1;
  }

  .mark b {
    position: absolute;
    left: calc(100% + 37px);
    top: 13px;
    font-weight: 400;
    font-size: 26px;
    line-height: 28px;
    color: #fc2013;
  }

  .axis + .axis {
    margin-top: 8px;
  }

  .axis label {
    width: 74px;
  }

  .axis input[type="text"] {
    margin-left: 18px;
  }

  .checks {
    margin-top: 4px;
  }

  .tail {
    padding: 0 6px 10px;
  }

  .check {
    display: flex;
    align-items: center;
    gap: 6px;
    height: 27px;
    padding-left: 1px;
  }

  fieldset {
    min-width: 0;
    margin: 13px 4px 0 4px;
    padding: 6px 10px 8px;
    border: 1px solid #d3d5d8;
  }

  legend {
    padding: 0 5px 0 0;
  }

  legend .check {
    height: 20px;
    padding-left: 0;
  }

  .limit {
    color: #6e7073;
  }

  .limit + .limit {
    margin-top: 8px;
  }

  .limit label {
    width: 73px;
  }

  .side {
    display: flex;
    flex-direction: column;
    gap: 6px;
    min-height: 0;
  }

  .graphics {
    flex: 1;
  }

  .graphics .toolbar {
    padding: 0 0 4px 6px;
  }

  .graphics .drop {
    margin-right: 4px;
  }

  .graphics .on {
    margin: 0 -2px;
  }

  .rule {
    width: 1px;
    height: 20px;
    margin-left: 3px;
    background: #c9cbce;
  }

  .chart {
    flex: 1 !important;
    min-height: 0;
    width: 100%;
    background: #fff;
  }

  .app .chart text {
    font-family: "DejaVu Sans", "Noto Sans CJK SC", sans-serif;
    font-size: 15px;
    text-anchor: middle;
  }

  .app .chart .unit {
    font-size: 14px;
  }

  .grid path { stroke: #ececec; stroke-width: 2; }
  .ticks path { stroke: #606060; stroke-width: 2; }
  .frame { fill: none; stroke: #808080; stroke-width: 2; }
  .curve { fill: none; stroke: #2143f0; stroke-width: 1; }

  .messages {
    height: 187px;
    flex: none;
    margin-bottom: -7px;
    padding-bottom: 11px;
  }

  .messages > header {
    align-items: flex-end;
    height: 36px;
    gap: 10px;
    padding-left: 5px;
    border-bottom: 1px solid #d3d5d8;
  }

  .tab {
    box-sizing: border-box;
    height: 30px;
    gap: 10px;
    padding: 2px 5px 0;
    background: #e9eaeb;
    font-size: 17px;
  }

  .tab > :global(svg) {
    color: #c5cad2;
    margin-right: 2px;
  }

  .tab.current {
    height: 31px;
    margin-bottom: -1px;
    border: 1px solid #d3d5d8;
    border-bottom: 0;
    background: #fafbff;
    color: #2b579a;
  }

  .messages .panel-tools {
    padding-bottom: 5px;
  }

  .messages .toolbar {
    height: 35px;
    padding: 3px 0 0 8px;
    gap: 2px;
    box-sizing: border-box;
  }

  .logbox {
    flex: 1;
    min-height: 0;
    display: flex;
    margin: 0 6px 0 5px;
    border: 1px solid #d3d5d8;
  }

  .log {
    flex: 1;
    min-width: 0;
    padding: 0 2px;
    white-space: pre;
    overflow: hidden;
  }

  .meter {
    position: absolute;
    right: 0;
    top: 741px;
    display: flex;
    flex-direction: column;
    gap: 2px;
    width: 5px;
    padding: 8px 3px 8px 4px;
    background: #4a5060;
    border-radius: 5px 0 0 5px;
  }

  .meter span {
    height: 2px;
  }

  .watermark {
    position: absolute;
    right: 14px;
    bottom: 6px;
    font-size: 17px;
    line-height: 24px;
    color: #8f9194;
  }
</style>
